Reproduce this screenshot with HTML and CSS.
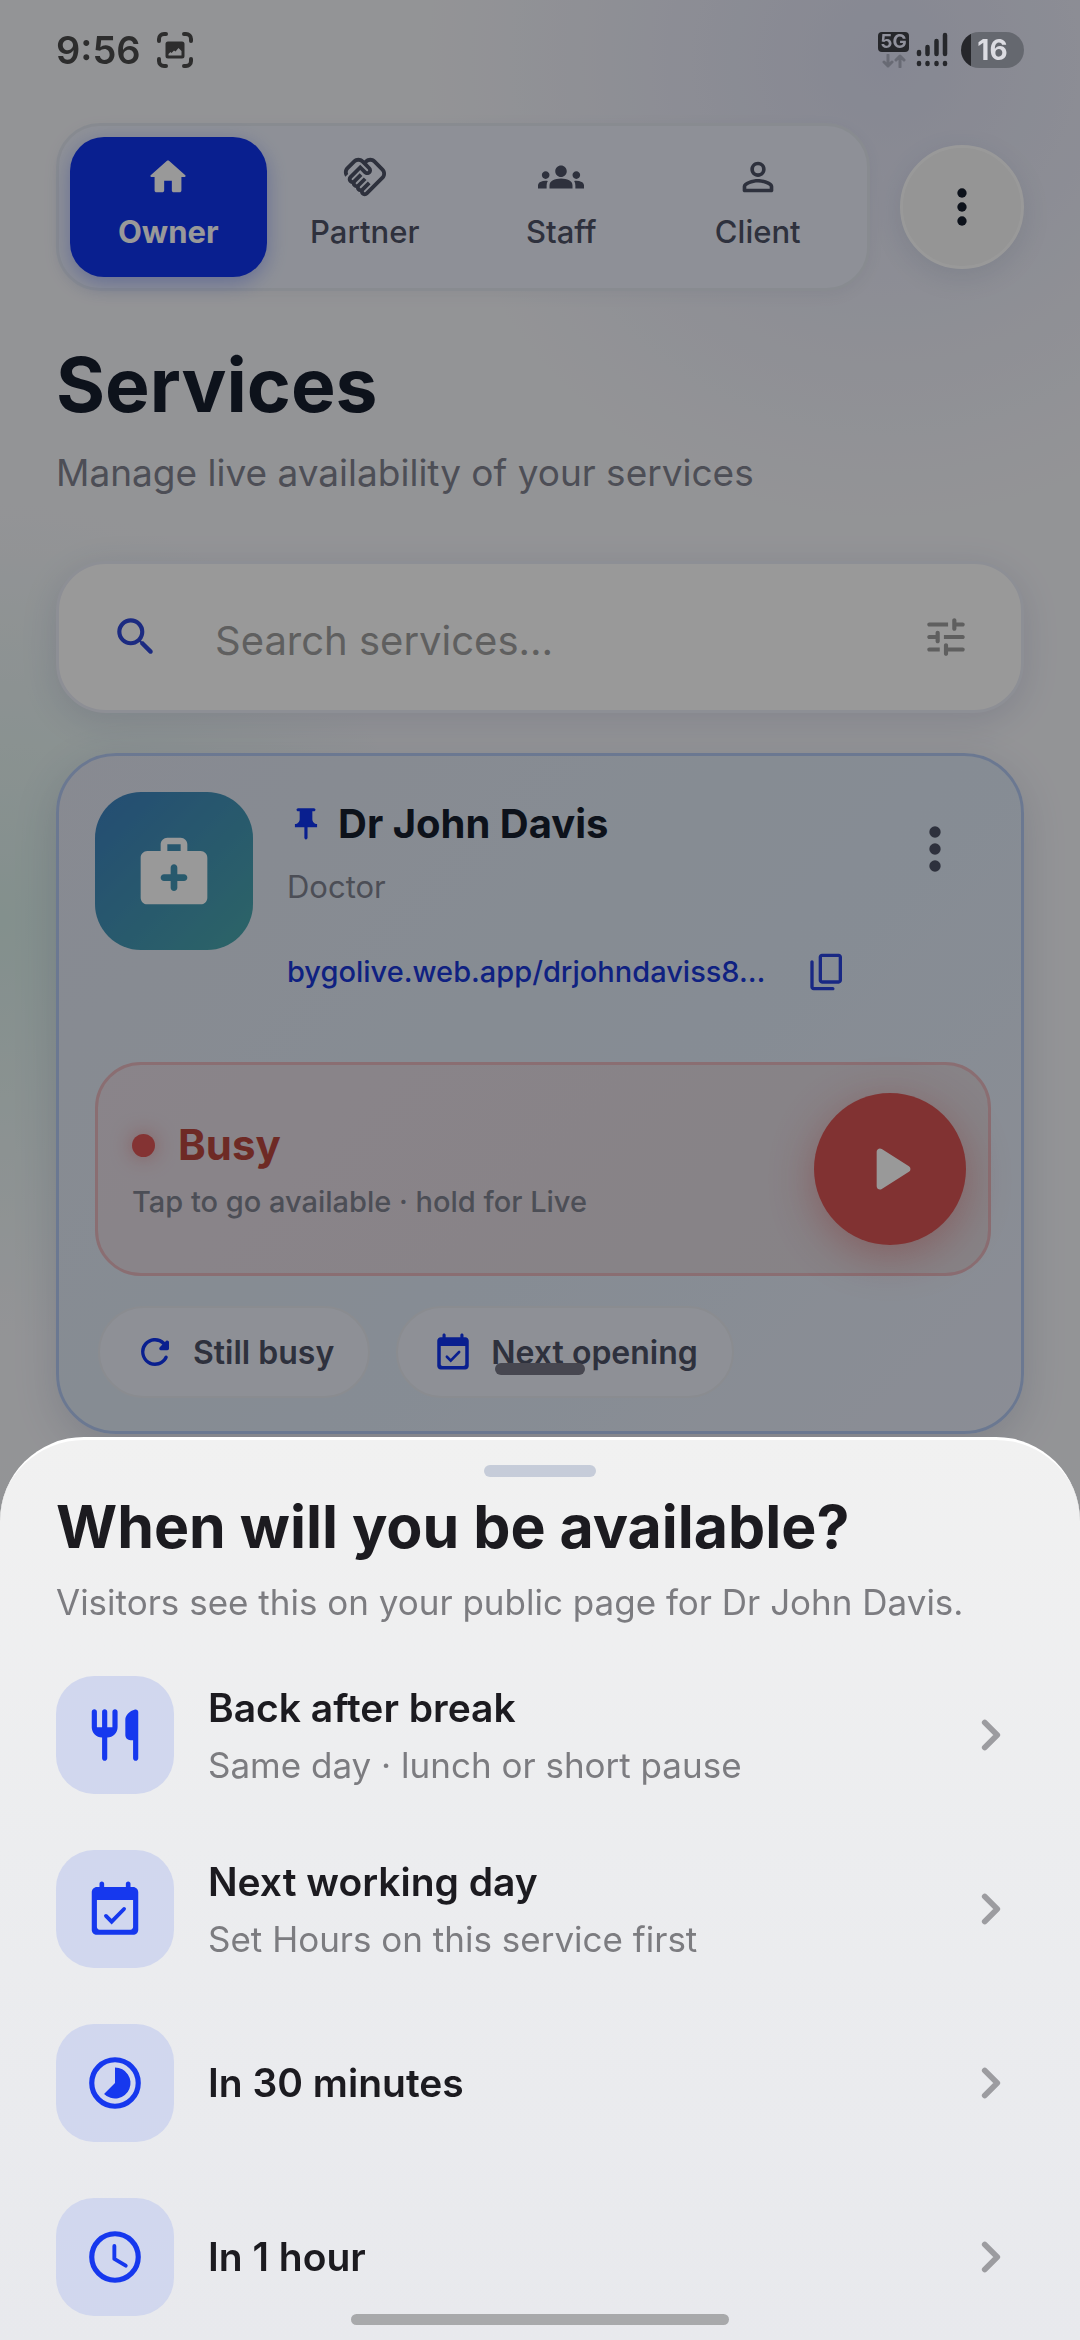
FILE: index.html
```
<!DOCTYPE html>
<html lang="en">
<head>
    <meta charset="UTF-8">
    <meta name="viewport" content="width=device-width, initial-scale=1.0">
    <title>Services</title>
    <link rel="stylesheet" href="styles.css">
</head>
<body>
    <!-- status bar -->
    <div class="status-bar">
        <div class="status-left">
            <span class="clock">9:56</span>
            <svg class="status-shot" viewBox="0 0 36 36" fill="none" stroke="currentColor" stroke-width="4" stroke-linecap="round">
                <path d="M2 9V7a5 5 0 0 1 5-5h2M27 2h2a5 5 0 0 1 5 5v2M34 27v2a5 5 0 0 1-5 5h-2M9 34H7a5 5 0 0 1-5-5v-2"/>
                <path fill="currentColor" stroke="none" fill-rule="evenodd" d="M11 9.500h14a2.500 2.500 0 0 1 2.500 2.500v12a2.500 2.500 0 0 1-2.500 2.500H11A2.500 2.500 0 0 1 8.500 24V12A2.500 2.500 0 0 1 11 9.500zM11.500 23.500h13V19l-3-3-3 3.500-1.500-1-2.500 2.500-1-1-2 2z"/>
            </svg>
        </div>
        <div class="status-right">
            <div class="network">
                <span class="network-type">5G</span>
                <svg class="network-arrows" viewBox="0 0 24 14" fill="none" stroke="currentColor" stroke-width="3" stroke-linecap="round" stroke-linejoin="round">
                    <path d="M6 1v11M2 8l4 4 4-4M18 13V2M14 6l4-4 4 4"/>
                </svg>
            </div>
            <svg class="signal" viewBox="0 0 32 36" stroke="currentColor" stroke-width="4.500" stroke-linecap="round">
                <path d="M3 20v2M11.500 15v7M20.500 9v13M29 3v19M3 31v1M11.500 31v1M20.500 31v1M29 31v1"/>
            </svg>
            <div class="battery">16</div>
        </div>
    </div>

    <main class="app">
        <div class="top-row">
            <nav class="tabs">
                <button class="tab active" type="button">
                    <svg class="icon" viewBox="0 0 24 24"><path d="M10 19v-5h4v5c0 .55.45 1 1 1h3c.55 0 1-.45 1-1v-7h1.700c.46 0 .68-.57.33-.87L12.670 3.600c-.38-.34-.96-.34-1.340 0l-8.360 7.530c-.34.3-.13.87.33.87H5v7c0 .55.45 1 1 1h3c.55 0 1-.45 1-1z"/></svg>
                    <span>Owner</span>
                </button>
                <button class="tab" type="button">
                    <svg class="icon" viewBox="0 0 24 24"><path d="M12.220,19.850c-0.180,0.180-0.500,0.210-0.710,0c-0.180-0.180-0.210-0.500,0-0.710l3.390-3.390l-1.410-1.410l-3.390,3.390c-0.190,0.200-0.510,0.190-0.710,0c-0.210-0.210-0.180-0.530,0-0.710l3.390-3.390l-1.410-1.410l-3.390,3.390c-0.180,0.180-0.500,0.210-0.710,0c-0.190-0.190-0.190-0.510,0-0.710l3.390-3.390L9.240,10.100l-3.390,3.390c-0.180,0.180-0.500,0.210-0.710,0c-0.190-0.200-0.190-0.510,0-0.710L9.520,8.400l1.870,1.860c0.950,0.950,2.590,0.940,3.540,0c0.980-0.980,0.980-2.560,0-3.540l-1.860-1.860l0.280-0.280c0.780-0.780,2.050-0.780,2.830,0l4.240,4.240c0.780,0.780,0.780,2.050,0,2.830L12.220,19.850z M21.830,13.070c1.560-1.560,1.560-4.090,0-5.660l-4.240-4.240c-1.560-1.560-4.090-1.560-5.660,0l-0.280,0.280l-0.280-0.280c-1.560-1.560-4.090-1.560-5.660,0L2.170,6.710c-1.420,1.420-1.550,3.630-0.400,5.190l1.450-1.450c-0.390-0.750-0.260-1.700,0.370-2.330l3.540-3.540c0.780-0.780,2.050-0.780,2.830,0l3.560,3.560c0.180,0.180,0.210,0.500,0,0.710c-0.210,0.210-0.530,0.180-0.710,0L9.520,5.570l-5.800,5.790c-0.980,0.970-0.980,2.560,0,3.540c0.390,0.390,0.890,0.630,1.420,0.700c0.070,0.520,0.300,1.020,0.700,1.420c0.400,0.400,0.900,0.630,1.420,0.700c0.070,0.520,0.300,1.020,0.700,1.420c0.400,0.400,0.900,0.630,1.420,0.700c0.070,0.540,0.310,1.030,0.700,1.420c0.470,0.470,1.100,0.730,1.770,0.730c0.670,0,1.300-0.260,1.770-0.730L21.830,13.070z"/></svg>
                    <span>Partner</span>
                </button>
                <button class="tab" type="button">
                    <svg class="icon" viewBox="0 0 24 24"><path d="M12 12.750c1.630 0 3.070.39 4.240.9 1.080.48 1.760 1.560 1.760 2.730V18H6v-1.610c0-1.180.68-2.260 1.760-2.730 1.170-.52 2.610-.91 4.240-.91zM4 13c1.100 0 2-.9 2-2s-.9-2-2-2-2 .9-2 2 .9 2 2 2zm1.130 1.100c-.37-.06-.74-.1-1.130-.1-.99 0-1.930.21-2.780.58C.48 14.900 0 15.620 0 16.430V18h4.500v-1.610c0-.83.23-1.610.63-2.290zM20 13c1.100 0 2-.9 2-2s-.9-2-2-2-2 .9-2 2 .9 2 2 2zm4 3.430c0-.81-.48-1.530-1.220-1.850-.85-.37-1.790-.58-2.780-.58-.39 0-.76.04-1.130.1.4.68.63 1.460.63 2.290V18H24v-1.570zM12 6c1.660 0 3 1.340 3 3s-1.340 3-3 3-3-1.340-3-3 1.340-3 3-3z"/></svg>
                    <span>Staff</span>
                </button>
                <button class="tab" type="button">
                    <svg class="icon" viewBox="0 0 24 24"><path d="M12 5.900a2.100 2.100 0 1 1 0 4.200 2.100 2.100 0 0 1 0-4.200m0 9c2.970 0 6.100 1.460 6.100 2.100v1.100H5.900V17c0-.64 3.130-2.100 6.100-2.100M12 4C9.790 4 8 5.790 8 8s1.790 4 4 4 4-1.790 4-4-1.790-4-4-4zm0 9c-2.670 0-8 1.340-8 4v2c0 .55.45 1 1 1h14c.55 0 1-.45 1-1v-2c0-2.660-5.330-4-8-4z"/></svg>
                    <span>Client</span>
                </button>
            </nav>
            <button class="round-btn" type="button" aria-label="More options">
                <svg class="icon" viewBox="0 0 24 24"><circle cx="12" cy="6" r="2"/><circle cx="12" cy="12" r="2"/><circle cx="12" cy="18" r="2"/></svg>
            </button>
        </div>

        <h1>Services</h1>
        <p class="lead">Manage live availability of your services</p>

        <div class="search">
            <svg class="icon search-icon" viewBox="0 0 24 24"><path d="M15.500 14h-.79l-.28-.27A6.471 6.471 0 0 0 16 9.500 6.500 6.500 0 1 0 9.500 16c1.610 0 3.090-.59 4.230-1.570l.27.28v.79l4.250 4.250c.41.41 1.080.41 1.490 0 .41-.41.41-1.080 0-1.490L15.500 14zm-6 0C7.010 14 5 11.990 5 9.500S7.010 5 9.500 5 14 7.010 14 9.500 11.990 14 9.500 14z"/></svg>
            <input class="search-input" type="text" placeholder="Search services…" aria-label="Search services">
            <button class="filter-btn" type="button" aria-label="Filters">
                <svg class="icon" viewBox="0 0 24 24"><path d="M3 18c0 .55.45 1 1 1h5v-2H4c-.55 0-1 .45-1 1zM3 6c0 .55.45 1 1 1h9V5H4c-.55 0-1 .45-1 1zm10 14v-1h7c.55 0 1-.45 1-1s-.45-1-1-1h-7v-1c0-.55-.45-1-1-1s-1 .45-1 1v4c0 .55.45 1 1 1s1-.45 1-1zM7 10v1H4c-.55 0-1 .45-1 1s.45 1 1 1h3v1c0 .55.45 1 1 1s1-.45 1-1v-4c0-.55-.45-1-1-1s-1 .45-1 1zm14 2c0-.55-.45-1-1-1h-9v2h9c.55 0 1-.45 1-1zm-5-3c.55 0 1-.45 1-1V7h3c.55 0 1-.45 1-1s-.45-1-1-1h-3V4c0-.55-.45-1-1-1s-1 .45-1 1v4c0 .55.45 1 1 1z"/></svg>
            </button>
        </div>

        <section class="card">
            <div class="card-head">
                <div class="avatar">
                    <svg class="icon" viewBox="0 0 24 24"><path d="M20 6h-4V4c0-1.100-.9-2-2-2h-4c-1.100 0-2 .9-2 2v2H4c-1.100 0-2 .9-2 2v12c0 1.100.9 2 2 2h16c1.100 0 2-.9 2-2V8c0-1.100-.9-2-2-2zM10 4h4v2h-4V4zm5 11h-2v2c0 .55-.45 1-1 1s-1-.45-1-1v-2H9c-.55 0-1-.45-1-1s.45-1 1-1h2v-2c0-.55.45-1 1-1s1 .45 1 1v2h2c.55 0 1 .45 1 1s-.45 1-1 1z"/></svg>
                </div>
                <div class="info">
                    <h2>
                        <svg class="icon pin" viewBox="0 0 24 24"><path d="M16 9V4h1c.55 0 1-.45 1-1s-.45-1-1-1H7c-.55 0-1 .45-1 1s.45 1 1 1h1v5c0 1.660-1.340 3-3 3v2h5.970v7l1 1 1-1v-7H19v-2c-1.660 0-3-1.340-3-3z"/></svg>
                        Dr John Davis
                    </h2>
                    <p class="role">Doctor</p>
                    <div class="link-row">
                        <a class="link" href="#">bygolive.web.app/drjohndaviss8…</a>
                        <button class="copy-btn" type="button" aria-label="Copy link">
                            <svg class="icon" viewBox="0 0 24 24"><path fill-rule="evenodd" d="M9 1h10c1.100 0 2 .9 2 2v14c0 1.100-.9 2-2 2H9c-1.100 0-2-.9-2-2V3c0-1.100.9-2 2-2zm0 2v14h10V3H9zM3 5c.55 0 1 .45 1 1v15h11.500c.55 0 1 .45 1 1s-.45 1-1 1H4c-1.100 0-2-.9-2-2V6c0-.55.45-1 1-1z"/></svg>
                        </button>
                    </div>
                </div>
                <button class="card-more" type="button" aria-label="Service options">
                    <svg class="icon" viewBox="0 0 24 24"><circle cx="12" cy="6" r="2"/><circle cx="12" cy="12" r="2"/><circle cx="12" cy="18" r="2"/></svg>
                </button>
            </div>

            <div class="status-box">
                <div class="status-text">
                    <div class="status-name"><span class="dot"></span>Busy</div>
                    <p>Tap to go available · hold for Live</p>
                </div>
                <button class="play-btn" type="button" aria-label="Go available">
                    <svg class="icon" viewBox="0 0 24 24"><path d="M8 6.820v10.360c0 .79.87 1.270 1.540.84l8.140-5.180c.62-.39.62-1.290 0-1.690L9.540 5.980C8.870 5.550 8 6.030 8 6.820z"/></svg>
                </button>
            </div>

            <div class="chips">
                <button class="chip" type="button">
                    <svg class="icon" viewBox="0 0 24 24"><path d="M17.650 6.350A7.958 7.958 0 0 0 11.170 4.040c-3.900.4-7.070 3.590-7.140 7.510C3.940 16.230 7.560 20 12 20c3.190 0 5.930-1.870 7.210-4.560.32-.67-.16-1.440-.9-1.440-.37 0-.72.2-.88.53A6 6 0 1 1 16.220 7.780l-1.510 1.510c-.63.63-.19 1.710.7 1.710H19c.55 0 1-.45 1-1V6.410c0-.89-1.080-1.340-1.710-.71l-.64.65z"/></svg>
                    Still busy
                </button>
                <button class="chip" type="button">
                    <svg class="icon" viewBox="0 0 24 24"><path d="M19 3.500h-1V2.200c0-.4-.4-.8-.9-.8s-.9.400-.9.800v1.300H7.800V2.200c0-.4-.4-.8-.9-.8s-.9.400-.9.800v1.300H5c-1.100 0-2 .9-2 2V20c0 1.100.9 2 2 2h14c1.100 0 2-.9 2-2V5.500c0-1.100-.9-2-2-2zM18 20H6c-.55 0-1-.45-1-1V8.500h14V19c0 .55-.45 1-1 1z"/><path fill="none" stroke="currentColor" stroke-width="1.500" stroke-linecap="round" d="m8.500 14.700 2.200 2.200 4.800-4.900"/></svg>
                    Next opening
                </button>
            </div>
        </section>
    </main>

    <div class="nav-pill"></div>
    <div class="scrim"></div>

    <!-- bottom sheet -->
    <section class="sheet">
        <div class="handle"></div>
        <h2>When will you be available?</h2>
        <p class="sheet-lead">Visitors see this on your public page for Dr John Davis.</p>
        <div class="options">
            <button class="option" type="button">
                <span class="tile"><svg class="icon" viewBox="0 0 24 24"><path d="M11 9H9V3c0-.55-.45-1-1-1s-1 .45-1 1v6H5V3c0-.55-.45-1-1-1s-1 .45-1 1v6c0 2.210 1.790 4 4 4v8c0 .55.45 1 1 1s1-.45 1-1v-8c2.210 0 4-1.790 4-4V3c0-.55-.45-1-1-1s-1 .45-1 1v6zm5-3v6c0 1.100.9 2 2 2h1v7c0 .55.45 1 1 1s1-.45 1-1V3.130c0-.65-.61-1.130-1.240-.98C17.600 2.680 16 4.510 16 6z"/></svg></span>
                <span class="option-text"><strong>Back after break</strong><small>Same day · lunch or short pause</small></span>
                <svg class="icon chevron" viewBox="0 0 24 24"><path d="m9.500 7 5 5-5 5"/></svg>
            </button>
            <button class="option" type="button">
                <span class="tile"><svg class="icon" viewBox="0 0 24 24"><path d="M19 3.500h-1V2.200c0-.4-.4-.8-.9-.8s-.9.400-.9.800v1.300H7.800V2.200c0-.4-.4-.8-.9-.8s-.9.400-.9.800v1.300H5c-1.100 0-2 .9-2 2V20c0 1.100.9 2 2 2h14c1.100 0 2-.9 2-2V5.500c0-1.100-.9-2-2-2zM18 20H6c-.55 0-1-.45-1-1V8.500h14V19c0 .55-.45 1-1 1z"/><path fill="none" stroke="currentColor" stroke-width="1.500" stroke-linecap="round" d="m8.500 14.700 2.200 2.200 4.800-4.900"/></svg></span>
                <span class="option-text"><strong>Next working day</strong><small>Set Hours on this service first</small></span>
                <svg class="icon chevron" viewBox="0 0 24 24"><path d="m9.500 7 5 5-5 5"/></svg>
            </button>
            <button class="option" type="button">
                <span class="tile"><svg class="icon" viewBox="0 0 24 24"><circle cx="12" cy="12" r="9" fill="none" stroke="currentColor" stroke-width="2"/><path d="M12 6v6l-4.240 4.240A6 6 0 1 0 12 6z"/></svg></span>
                <span class="option-text"><strong>In 30 minutes</strong></span>
                <svg class="icon chevron" viewBox="0 0 24 24"><path d="m9.500 7 5 5-5 5"/></svg>
            </button>
            <button class="option" type="button">
                <span class="tile"><svg class="icon" viewBox="0 0 24 24"><g fill="none" stroke="currentColor" stroke-linecap="round" stroke-linejoin="round"><circle cx="12" cy="12" r="9" stroke-width="2"/><path stroke-width="1.500" d="M11.750 7.750v5l4.400 2.600"/></g></svg></span>
                <span class="option-text"><strong>In 1 hour</strong></span>
                <svg class="icon chevron" viewBox="0 0 24 24"><path d="m9.500 7 5 5-5 5"/></svg>
            </button>
        </div>
    </section>

    <div class="home-bar"></div>
</body>
</html>
```

FILE: styles.css
```
* {
    box-sizing: border-box;
}

body {
    margin: 0;
    min-height: 100vh;
    overflow: hidden;
    font-family: Inter, "Open Sans", sans-serif;
    color: #171e2e;
    background:
        radial-gradient(circle 460px at 82% 60px, rgba(165, 172, 230, 0.28), transparent),
        radial-gradient(circle 420px at 0 920px, rgba(140, 220, 190, 0.26), transparent),
        #f6f7fb;
}

h1,
h2,
p {
    margin: 0;
}

button {
    border: 0;
    padding: 0;
    background: none;
    font: inherit;
    color: inherit;
}

.icon {
    display: block;
    flex: none;
    fill: currentColor;
}

/* status bar */
.status-bar {
    position: relative;
    z-index: 4;
    display: flex;
    justify-content: space-between;
    align-items: center;
    height: 100px;
    padding: 0 56px;
    color: #2d2d2d;
}

.status-left,
.status-right {
    display: flex;
    align-items: center;
}

.status-left {
    gap: 16px;
}

.clock {
    font-size: 38px;
    font-weight: 600;
}

.status-shot {
    width: 36px;
    height: 36px;
}

.status-right {
    gap: 7px;
    color: #26272b;
}

.network {
    display: flex;
    flex-direction: column;
    align-items: center;
    gap: 2px;
}

.network-type {
    width: 31px;
    border-radius: 4px;
    background: #26272b;
    color: #90919c;
    font-size: 19px;
    font-weight: 700;
    line-height: 20px;
    text-align: center;
}

.network-arrows {
    width: 24px;
    height: 14px;
    color: #686a74;
}

.signal {
    width: 32px;
    height: 36px;
}

.battery {
    width: 63px;
    margin-left: 6px;
    border-radius: 18px;
    background: linear-gradient(90deg, #26272b 10px, #65686f 10px);
    color: #dcdce2;
    font-size: 28px;
    font-weight: 700;
    line-height: 36px;
    text-align: center;
}

/* page */
.app {
    padding: 23px 56px 0;
}

.top-row {
    display: flex;
    align-items: center;
    gap: 30px;
}

.tabs {
    display: flex;
    flex: 1;
    padding: 11px;
    border: 3px solid #e3e8f1;
    border-radius: 44px;
    background: #edf1fc;
    box-shadow: 0 4px 16px rgba(60, 70, 110, 0.06);
}

.tab {
    display: flex;
    flex: 1;
    flex-direction: column;
    align-items: center;
    gap: 13px;
    padding: 17px 0 26px;
    border-radius: 34px;
    color: #4d5266;
    font-size: 31px;
    font-weight: 500;
    line-height: 38px;
}

.tab .icon {
    width: 46px;
    height: 46px;
}

.tab.active {
    background: #1034ee;
    color: #fff;
    font-weight: 700;
    box-shadow: 0 6px 20px rgba(16, 52, 238, 0.3);
}

.round-btn {
    display: flex;
    align-items: center;
    justify-content: center;
    width: 124px;
    height: 124px;
    border: 3px solid #fff;
    border-radius: 50%;
    background: #f8f8f8;
    box-shadow: 0 8px 28px rgba(60, 80, 120, 0.12);
}

.round-btn .icon {
    width: 56px;
    height: 56px;
}

h1 {
    margin-top: 46px;
    font-size: 75px;
    font-weight: 700;
    line-height: 96px;
}

.lead {
    margin-top: 14px;
    color: #80838f;
    font-size: 37px;
    line-height: 52px;
}

.search {
    display: flex;
    align-items: center;
    margin-top: 62px;
    padding: 0 50px 0 52px;
    height: 152px;
    border: 3px solid #eceef8;
    border-radius: 50px;
    background: #fff;
    box-shadow: 0 8px 36px rgba(50, 60, 130, 0.14);
}

.search .icon {
    width: 50px;
    height: 50px;
}

.search-icon {
    color: #3049d8;
}

.search-input {
    flex: 1;
    min-width: 0;
    margin-left: 54px;
    padding: 6px 0 0;
    border: 0;
    outline: 0;
    background: none;
    font: inherit;
    font-size: 40px;
}

.search-input::placeholder {
    color: #9e9e9e;
    opacity: 1;
}

.filter-btn {
    color: #9e9e9e;
}

/* service card */
.card {
    margin-top: 40px;
    padding: 36px 30px 33px 36px;
    border: 3px solid #b3c9f2;
    border-radius: 60px;
    background: linear-gradient(135deg, #e3e7f2, #dfeaf7 55%, #e8ecf8);
    box-shadow: 0 12px 44px rgba(50, 60, 110, 0.16);
}

.card-head {
    display: flex;
    align-items: flex-start;
    gap: 34px;
}

.avatar {
    display: flex;
    align-items: center;
    justify-content: center;
    width: 158px;
    height: 158px;
    border-radius: 46px;
    background: linear-gradient(135deg, #3c80c0, #4aa8ac);
    color: #fff;
}

.avatar .icon {
    width: 80px;
    height: 80px;
}

.info {
    flex: 1;
    min-width: 0;
    padding-top: 4px;
}

.info h2 {
    display: flex;
    align-items: center;
    gap: 13px;
    font-size: 40px;
    font-weight: 700;
    line-height: 56px;
}

.pin {
    width: 38px;
    height: 38px;
    color: #1034ee;
}

.role {
    margin-top: 16px;
    color: #7f8390;
    font-size: 31px;
    line-height: 38px;
}

.link-row {
    display: flex;
    align-items: center;
    gap: 42px;
    margin-top: 46px;
}

.link {
    color: #1a38d8;
    font-size: 29px;
    font-weight: 500;
    line-height: 38px;
    text-decoration: none;
}

.copy-btn {
    color: #2a44dc;
}

.copy-btn .icon {
    width: 40px;
    height: 40px;
}

.card-more {
    padding: 23px 22px;
    color: #4d5266;
}

.card-more .icon {
    width: 68px;
    height: 68px;
}

.status-box {
    display: flex;
    align-items: center;
    justify-content: space-between;
    height: 214px;
    margin-top: 70px;
    padding: 0 22px 0 34px;
    border: 3px solid #e6b7be;
    border-radius: 46px;
    background: linear-gradient(135deg, #e6dde6, #e0d9df);
}

.status-name {
    display: flex;
    align-items: center;
    gap: 23px;
    color: #b8473f;
    font-size: 42px;
    font-weight: 700;
    line-height: 56px;
}

.dot {
    width: 23px;
    height: 23px;
    border-radius: 50%;
    background: #dc5656;
    box-shadow: 0 0 20px rgba(220, 86, 86, 0.5);
}

.status-text p {
    margin-top: 10px;
    color: #7f8390;
    font-size: 29px;
    font-weight: 500;
    line-height: 38px;
}

.play-btn {
    display: flex;
    align-items: center;
    justify-content: center;
    width: 152px;
    height: 152px;
    border-radius: 50%;
    background: #d85454;
    color: #fff;
    box-shadow: 0 10px 44px rgba(216, 84, 84, 0.45);
}

.play-btn .icon {
    width: 80px;
    height: 80px;
}

.chips {
    display: flex;
    gap: 26px;
    margin-top: 30px;
    padding-left: 3px;
}

.chip {
    display: flex;
    align-items: center;
    gap: 17px;
    height: 92px;
    padding: 0 34px;
    border: 2px solid #e6e9f1;
    border-radius: 46px;
    background: #edf1fb;
    color: #4d5266;
    font-size: 32px;
    font-weight: 600;
}

.chip .icon {
    width: 42px;
    height: 42px;
    color: #1034ee;
}

/* overlay layers */
.nav-pill,
.home-bar,
.scrim,
.sheet {
    position: fixed;
}

.nav-pill {
    bottom: 965px;
    left: 50%;
    width: 90px;
    height: 12px;
    margin-left: -45px;
    border-radius: 6px;
    background: #777785;
}

.scrim {
    inset: 0;
    z-index: 2;
    background: rgba(0, 0, 0, 0.4);
}

.sheet {
    right: 0;
    bottom: 0;
    left: 0;
    z-index: 3;
    padding: 25px 56px 24px;
    border-top: 3px solid #fff;
    border-radius: 84px 84px 0 0;
    background: linear-gradient(#f1f1f1, #ecedef 45%, #e8e9ed);
    color: #1c1b20;
}

.handle {
    width: 112px;
    height: 12px;
    margin: 0 auto;
    border-radius: 6px;
    background: #c6ccd9;
}

.sheet h2 {
    margin-top: 12px;
    font-size: 59px;
    font-weight: 700;
    line-height: 76px;
}

.sheet-lead {
    margin-top: 14px;
    color: #7c7c80;
    font-size: 35px;
    line-height: 46px;
}

.options {
    display: flex;
    flex-direction: column;
    gap: 56px;
    margin-top: 51px;
}

.option {
    display: flex;
    align-items: center;
    gap: 34px;
    padding-right: 3px;
    text-align: left;
}

.tile {
    display: flex;
    align-items: center;
    justify-content: center;
    width: 118px;
    height: 118px;
    border-radius: 38px;
    background: #d1d7ee;
    color: #1638ee;
}

.tile .icon {
    width: 62px;
    height: 62px;
}

.option-text {
    display: flex;
    flex: 1;
    flex-direction: column;
    gap: 8px;
}

.option-text strong {
    font-size: 39px;
    font-weight: 600;
    line-height: 52px;
}

.option-text small {
    color: #7c7c80;
    font-size: 35px;
    line-height: 46px;
}

.chevron {
    width: 60px;
    height: 60px;
    fill: none;
    stroke: #9c9ca0;
    stroke-width: 2.3;
    stroke-linecap: round;
    stroke-linejoin: round;
}

.home-bar {
    bottom: 15px;
    left: 50%;
    z-index: 4;
    width: 378px;
    height: 11px;
    margin-left: -189px;
    border-radius: 6px;
    background: #a8a9ab;
}
```
